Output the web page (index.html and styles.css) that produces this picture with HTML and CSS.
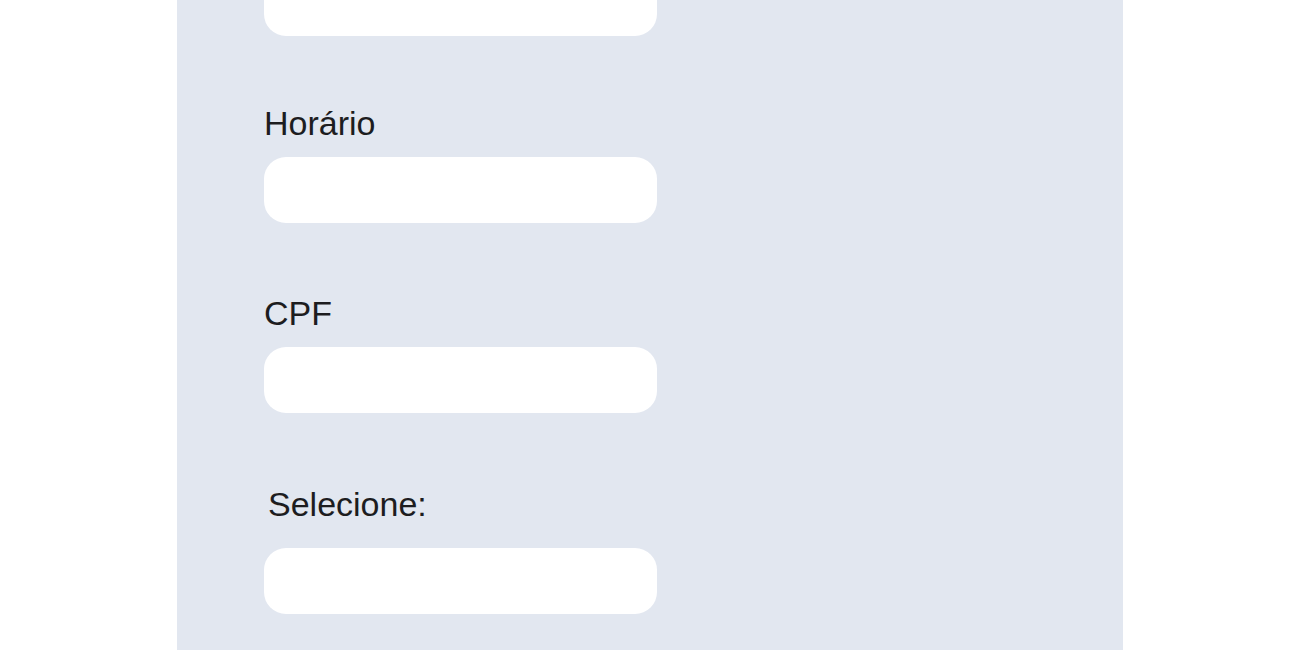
FILE: index.html
```html
<!DOCTYPE html>
<html lang="pt-BR">
<head>
<meta charset="utf-8">
<title>Formulário</title>
<link rel="stylesheet" href="styles.css">
</head>
<body>
<main class="panel">
  <form class="form">
    <div class="field field-first">
      <input class="input" type="text" aria-label="Data">
    </div>
    <div class="field field-gap">
      <label class="label" for="horario">Horário</label>
      <input class="input" id="horario" type="text">
    </div>
    <div class="field field-gap">
      <label class="label" for="cpf">CPF</label>
      <input class="input" id="cpf" type="text">
    </div>
    <div class="field field-gap field-select">
      <label class="label label-indent" for="sel">Selecione:</label>
      <input class="input" id="sel" type="text">
    </div>
  </form>
</main>
</body>
</html>
```

FILE: styles.css
```css
html, body {
  margin: 0;
  padding: 0;
  background: #ffffff;
  overflow: hidden;
}

.panel {
  width: 946px;
  margin: -30px auto 0;
  padding: 0 87px 120px;
  box-sizing: border-box;
  background: #e2e7f0;
  font-family: "Liberation Sans", Arial, sans-serif;
  color: #1d1d1f;
}

.form {
  display: flex;
  flex-direction: column;
}

.field {
  display: flex;
  flex-direction: column;
  gap: 15px;
}

.field-first {
  margin-bottom: 68px;
}

.field-gap + .field-gap {
  margin-top: 71px;
}

.field-select {
  gap: 25px;
}

.field-gap + .field-select {
  margin-top: 72px;
}

.label {
  font-size: 34px;
  line-height: 38px;
  height: 38px;
}

.label-indent {
  padding-left: 4px;
}

.input {
  display: block;
  width: 393px;
  height: 66px;
  box-sizing: border-box;
  border: none;
  border-radius: 22px;
  background: #ffffff;
  padding: 0 20px;
  font: inherit;
  font-size: 20px;
  outline: none;
}
```
